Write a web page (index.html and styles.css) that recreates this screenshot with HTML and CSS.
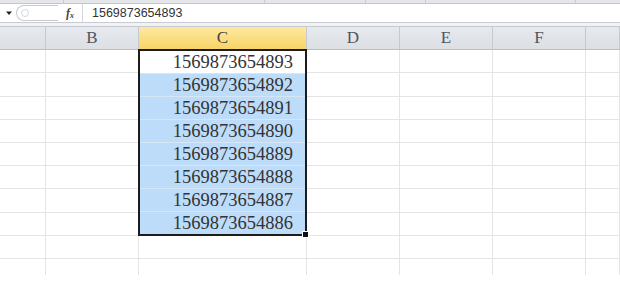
FILE: index.html
```html
<!DOCTYPE html>
<html lang="zh-CN">
<head>
    <meta charset="UTF-8">
    <title>Sheet</title>
    <link rel="stylesheet" href="styles.css">
</head>
<body>
    <!-- ribbon bottom edge -->
    <div class="ribbon-edge">
        <span class="sep" style="width:63px"></span>
        <span class="sep" style="width:200px"></span>
        <span class="sep" style="width:100px"></span>
        <span class="sep" style="width:59px"></span>
        <span class="sep" style="width:149px"></span>
    </div>

    <!-- formula bar -->
    <div class="formula-bar">
        <div class="name-box">
            <svg width="8" height="6" viewBox="0 0 8 6"><path d="M1 1.5h6L4 5z" fill="#222"/></svg>
        </div>
        <div class="pill">
            <span class="dot"></span>
        </div>
        <div class="fx">f<sub>x</sub></div>
        <div class="formula-input">1569873654893</div>
    </div>
    <div class="bar-gap"></div>

    <!-- sheet -->
    <div class="sheet">
        <div class="col-head"></div>
        <div class="col-head">B</div>
        <div class="col-head active">C</div>
        <div class="col-head">D</div>
        <div class="col-head">E</div>
        <div class="col-head">F</div>
        <div class="col-head"></div>

        <div class="selection">
            <div class="sel-cell first">1569873654893</div>
            <div class="sel-cell">1569873654892</div>
            <div class="sel-cell">1569873654891</div>
            <div class="sel-cell">1569873654890</div>
            <div class="sel-cell">1569873654889</div>
            <div class="sel-cell">1569873654888</div>
            <div class="sel-cell">1569873654887</div>
            <div class="sel-cell">1569873654886</div>
            <span class="fill-handle"></span>
        </div>
    </div>

    <script>
        // plain cells around the selected range
        const sheet = document.querySelector('.sheet');
        const rows = 10;
        for (let r = 0; r < rows; r++) {
            for (let c = 0; c < 7; c++) {
                if (c === 2 && r < 8) continue;
                const cell = document.createElement('div');
                cell.className = r === rows - 1 ? 'cell last' : 'cell';
                cell.style.gridRow = r + 2;
                cell.style.gridColumn = c + 1;
                sheet.appendChild(cell);
            }
        }
    </script>
</body>
</html>
```

FILE: styles.css
```css
body {
    margin: 0;
    background: #fff;
    font-family: 'Liberation Sans', Arial, sans-serif;
    overflow: hidden;
}
.ribbon-edge {
    height: 3px;
    background: #e4e6ea;
    border-bottom: 1px solid #c3c7cd;
    display: flex;
}
.ribbon-edge .sep {
    border-right: 1px solid #c9ccd1;
    height: 3px;
}
.formula-bar {
    height: 18px;
    display: flex;
    align-items: center;
    background: #fff;
    border-bottom: 1px solid #c8ccd2;
}
.name-box {
    width: 13px;
    display: flex;
    justify-content: flex-end;
}
.pill {
    margin-left: 3px;
    width: 42px;
    height: 16px;
    border: 1px solid #c6cad0;
    border-right: none;
    border-radius: 9px 0 0 9px;
    display: flex;
    align-items: center;
    padding-left: 4px;
    box-sizing: border-box;
}
.pill .dot {
    width: 6px;
    height: 6px;
    border: 1px solid #d4d7db;
    border-radius: 50%;
}
.fx {
    width: 24px;
    text-align: center;
    font-family: 'Liberation Serif', serif;
    font-style: italic;
    font-weight: bold;
    font-size: 12px;
    color: #444;
}
.fx sub {
    font-size: 8px;
    vertical-align: -1px;
}
.formula-input {
    flex: 1;
    height: 18px;
    border-left: 1px solid #d4d7dc;
    padding-left: 9px;
    font-size: 12.5px;
    line-height: 18px;
    color: #333;
}
.bar-gap {
    height: 3px;
    background: #f1f2f4;
    border-bottom: 1px solid #c5c9cf;
}
.sheet {
    display: grid;
    grid-template-columns: 46px 93px 168px 93px 93px 93px 1fr;
    grid-template-rows: 23px 23px 24px 23px 23px 23px 23px 24px 23px 23px 16px;
}
.col-head {
    background: linear-gradient(#e6e9ee, #dcdfe4);
    border-right: 1px solid #c6cace;
    border-bottom: 1px solid #b9bec5;
    font-family: 'Liberation Serif', serif;
    font-size: 17px;
    color: #505560;
    display: flex;
    align-items: center;
    justify-content: center;
}
.col-head.active {
    background: linear-gradient(#fde9a0, #f8d466);
    border-bottom-color: #e2b84a;
    color: #444;
}
.cell {
    border-right: 1px solid #e4e4e4;
    border-bottom: 1px solid #e4e4e4;
}
.cell.last {
    border-bottom: none;
}
.selection {
    grid-column: 3;
    grid-row: 2 / span 8;
    border: 2px solid #1c1c1c;
    margin: -1px 0 0 -1px;
    display: flex;
    flex-direction: column;
    position: relative;
}
.sel-cell {
    flex: 1;
    background: #bddcfa;
    border-bottom: 1px solid #d7e6f5;
    font-family: 'Liberation Serif', serif;
    font-size: 18.5px;
    color: #333;
    padding-right: 12px;
    display: flex;
    align-items: center;
    justify-content: flex-end;
}
.sel-cell:last-of-type {
    border-bottom: none;
}
.sel-cell.first {
    background: #fff;
}
.fill-handle {
    position: absolute;
    right: -4px;
    bottom: -4px;
    width: 5px;
    height: 5px;
    background: #111;
    border: 1px solid #fff;
}
```
